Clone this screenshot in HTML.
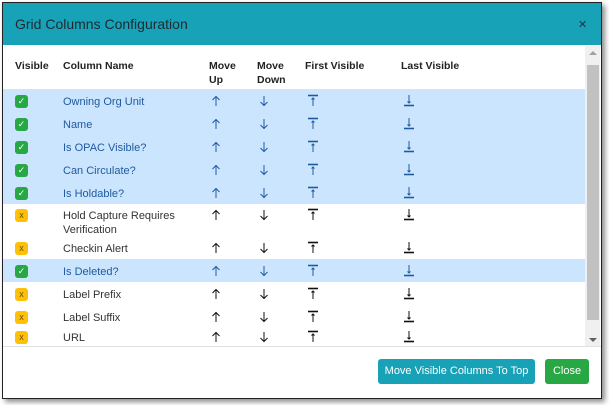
<html><head><style>
body{margin:0;width:609px;height:405px;background:#fff;font-family:"Liberation Sans",sans-serif;font-size:11px;position:relative;overflow:hidden}
.dlg{position:absolute;left:2px;top:2px;width:598px;height:395px;border:1px solid #222;box-shadow:3px 3px 5px rgba(0,0,0,.45);background:#fff;overflow:hidden}
.hdr{position:absolute;left:0;top:0;width:598px;height:42px;background:#17a2b8}
.hdr .t{position:absolute;left:12px;top:13px;font-size:14px;color:#1e2a30}
.hdr .x{position:absolute;left:575px;top:15px;font-size:11px;color:#234;}
.sb{position:absolute;left:582px;top:43px;width:15px;height:300px;background:#f0f0f0}
.th{position:absolute;left:584px;top:62px;width:12px;height:255px;background:#c1c1c1}
.foot{position:absolute;left:0;top:343px;width:598px;border-top:1px solid #dee2e6}
.btn{position:absolute;top:356px;height:25px;border-radius:3px;color:#fff;font-size:11px;line-height:25px;text-align:center}
.row{position:absolute;left:0;width:582px}
.hl{background:#cce5ff}
.c{position:absolute}
.ok{position:absolute;left:12px;width:13px;height:13px;border-radius:3px;background:#28a745;color:#fff;font-size:9px;line-height:13px;text-align:center}
.no{position:absolute;left:12px;width:13px;height:13px;border-radius:3px;background:#ffc107;color:#6a4a00;font-size:9px;line-height:13px;text-align:center}
.hd{position:absolute;font-weight:bold;font-size:10.5px;color:#222;line-height:14px}
</style></head><body>
<div class="dlg">
<div class="hdr"><div class="t">Grid Columns Configuration</div><div class="x">✕</div></div>
<div class="hd" style="left:12px;top:56px">Visible</div>
<div class="hd" style="left:60px;top:56px">Column Name</div>
<div class="hd" style="left:206px;top:56px">Move<br>Up</div>
<div class="hd" style="left:254px;top:56px">Move<br>Down</div>
<div class="hd" style="left:302px;top:56px">First Visible</div>
<div class="hd" style="left:398px;top:56px">Last Visible</div>
<div id="rows"></div>
<div class="sb"></div><div class="th"></div>
<div style="position:absolute;left:586px;top:48px;width:0;height:0;border:4px solid transparent;border-bottom-color:#a0a0a0;border-top:0"></div>
<div style="position:absolute;left:586px;top:335px;width:0;height:0;border:4px solid transparent;border-top-color:#606060;border-bottom:0"></div>
<div class="foot"></div>
<div class="btn" style="left:375px;width:157px;background:#17a2b8">Move Visible Columns To Top</div>
<div class="btn" style="left:542px;width:44px;background:#28a745">Close</div>
</div>
<script>
var R=[["Owning Org Unit",1,86,23],["Name",1,109,23],["Is OPAC Visible?",1,132,23],["Can Circulate?",1,155,23],["Is Holdable?",1,178,23],["Hold Capture Requires<br>Verification",0,201,33],["Checkin Alert",0,234,22],["Is Deleted?",1,256,23],["Label Prefix",0,279,23],["Label Suffix",0,302,23],["URL",0,325,18]];
var h="";
R.forEach(function(r){var col=r[1]?"#1f5aa0":"#111";
var up='<svg width="12" height="12" viewBox="0 0 12 12"><path d="M6 11V1.5M2.5 5L6 1.5L9.5 5" stroke="'+col+'" stroke-width="1" fill="none"/></svg>';
var dn='<svg width="12" height="12" viewBox="0 0 12 12"><path d="M6 1V10.5M2.5 7L6 10.5L9.5 7" stroke="'+col+'" stroke-width="1" fill="none"/></svg>';
var fi='<svg width="12" height="13" viewBox="0 0 12 13"><path d="M1 1.5H11" stroke="'+col+'" stroke-width="1.6"/><path d="M6 12V4M4.5 5.5L6 4L7.5 5.5" stroke="'+col+'" stroke-width="1" fill="none"/></svg>';
var la='<svg width="12" height="13" viewBox="0 0 12 13"><path d="M1 11.5H11" stroke="'+col+'" stroke-width="1.6"/><path d="M6 1V9M4.5 7.5L6 9L7.5 7.5" stroke="'+col+'" stroke-width="1" fill="none"/></svg>';
var t=r[3]>30?5:(r[3]-12)/2;
h+='<div class="row'+(r[1]?' hl':'')+'" style="top:'+r[2]+'px;height:'+r[3]+'px">'+
'<div class="'+(r[1]?'ok':'no')+'" style="top:'+(t)+'px">'+(r[1]?'✓':'x')+'</div>'+
'<div class="c" style="left:60px;top:'+t+'px;color:'+(r[1]?'#1f5aa0':'#333')+';line-height:14px">'+r[0]+'</div>'+
'<div class="c" style="left:207px;top:'+t+'px">'+up+'</div><div class="c" style="left:255px;top:'+t+'px">'+dn+'</div>'+
'<div class="c" style="left:304px;top:'+(t-1)+'px">'+fi+'</div><div class="c" style="left:400px;top:'+(t-1)+'px">'+la+'</div></div>';});
document.getElementById("rows").innerHTML=h;
</script>
</body></html>
